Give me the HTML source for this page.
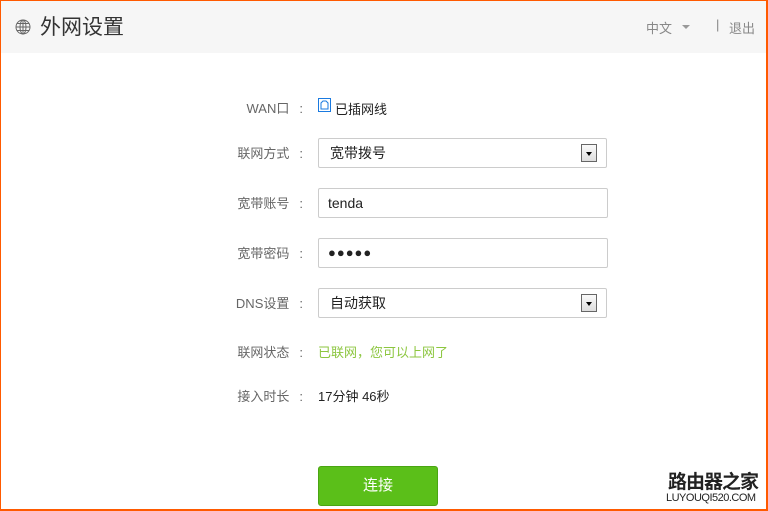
<!DOCTYPE html>
<html><head><meta charset="utf-8"><style>
*{margin:0;padding:0;box-sizing:border-box}
body{width:768px;height:511px;overflow:hidden;background:#fff;font-family:"Liberation Sans","Noto Sans CJK SC",sans-serif;position:relative}
.frame{position:absolute;left:0;top:0;width:768px;height:511px;border-top:1px solid #ff5a00;border-left:1px solid #ff5a00;border-right:2px solid #ff5a00;border-bottom:2px solid #ff5a00;z-index:5;pointer-events:none}
.hdr{position:absolute;left:0;top:0;width:768px;height:53px;background:#f6f6f6}
.title{position:absolute;left:40px;top:11px;font-size:21px;color:#333}
.globe{position:absolute;left:15px;top:19px}
.lang{position:absolute;left:646px;top:18px;font-size:13px;color:#888}
.tri{position:absolute;left:682px;top:25px;border-left:4px solid transparent;border-right:4px solid transparent;border-top:4px solid #999}
.sep{position:absolute;left:716px;top:17px;font-size:13px;color:#888}
.out{position:absolute;left:729px;top:18px;font-size:13px;color:#888}
.lbl{position:absolute;right:465px;font-size:13px;color:#666;text-align:right;white-space:nowrap}
.lbl i{font-style:normal;margin-left:10px}
.box{position:absolute;left:318px;width:290px;height:30px;border:1px solid #ccc;border-radius:2px;font-size:14px;color:#222;padding-left:9px;line-height:28px}
.sel{width:289px;padding-left:11px}
.arr{position:absolute;right:9px;top:5px;width:16px;height:18px;border:1px solid #666;background:linear-gradient(#fafafa,#ddd)}
.arr:after{content:"";position:absolute;left:4px;top:7px;border-left:3px solid transparent;border-right:3px solid transparent;border-top:4px solid #000}
.val{position:absolute;left:318px;font-size:13px}
.btn{position:absolute;left:318px;top:466px;width:120px;height:40px;background:#5bbf19;border:1px solid #4aa512;border-radius:3px;color:#fff;font-size:15px;text-align:center;line-height:38px}
.wm1{position:absolute;left:668px;top:467px;font-size:19px;font-weight:bold;color:#222;letter-spacing:-1px}
.wm2{position:absolute;left:666px;top:492px;font-size:11px;color:#222;letter-spacing:-0.5px}
</style></head><body>
<div class="hdr"></div>
<svg class="globe" width="16" height="16" viewBox="0 0 16 16" fill="none" stroke="#666" stroke-width="1"><circle cx="8" cy="8" r="7"/><ellipse cx="8" cy="8" rx="3" ry="7"/><line x1="1" y1="8" x2="15" y2="8"/><line x1="8" y1="1" x2="8" y2="15"/><line x1="2" y1="4.5" x2="14" y2="4.5"/><line x1="2" y1="11.5" x2="14" y2="11.5"/></svg>
<div class="title">外网设置</div>
<div class="lang">中文</div><div class="tri"></div>
<div class="sep">|</div><div class="out">退出</div>

<div class="lbl" style="top:98px">WAN口<i>:</i></div>
<svg style="position:absolute;left:318px;top:98px" width="13" height="14" viewBox="0 0 13 14"><rect x="0.5" y="0.5" width="12" height="13" fill="#fff" stroke="#1a7ae0"/><path d="M3 11V5L5 3H8L10 5V11Z" fill="none" stroke="#1a7ae0"/></svg>
<div class="val" style="left:335px;top:99px;color:#222">已插网线</div>

<div class="lbl" style="top:143px">联网方式<i>:</i></div>
<div class="box sel" style="top:138px">宽带拨号<div class="arr"></div></div>

<div class="lbl" style="top:193px">宽带账号<i>:</i></div>
<div class="box" style="top:188px">tenda</div>

<div class="lbl" style="top:243px">宽带密码<i>:</i></div>
<div class="box" style="top:238px;font-size:13px;letter-spacing:1px">●●●●●</div>

<div class="lbl" style="top:293px">DNS设置<i>:</i></div>
<div class="box sel" style="top:288px">自动获取<div class="arr"></div></div>

<div class="lbl" style="top:342px">联网状态<i>:</i></div>
<div class="val" style="top:342px;color:#8cc63f">已联网，您可以上网了</div>

<div class="lbl" style="top:386px">接入时长<i>:</i></div>
<div class="val" style="top:386px;color:#222">17分钟 46秒</div>

<div class="btn">连接</div>
<div class="wm1">路由器之家</div>
<div class="wm2">LUYOUQI520.COM</div>
<div class="frame"></div>
</body></html>
